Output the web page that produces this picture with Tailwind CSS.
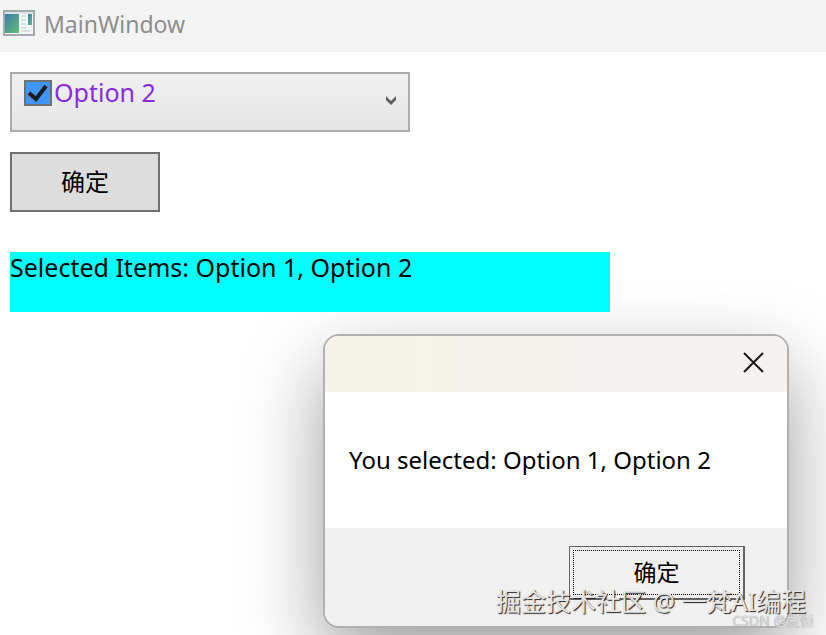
<!DOCTYPE html>
<html lang="zh-CN">
<head>
    <meta charset="utf-8"/>
    <meta content="width=device-width, initial-scale=1.0" name="viewport"/>
    <title>MainWindow</title>
    <script src="https://cdn.jsdelivr.net/npm/@tailwindcss/browser@4"></script>
</head>
<body class="relative min-h-screen overflow-hidden bg-white font-['Noto_Sans','Noto_Sans_CJK_SC',sans-serif] text-2xl text-black">
    <header class="flex h-13 items-center gap-2 bg-[#f3f3f3] px-[3px] pb-1">
        <svg class="h-7 w-8" viewBox="0 0 32 28" aria-hidden="true">
            <defs>
                <linearGradient id="pane" x1="0" y1="0" x2="1" y2="1">
                    <stop offset="0" stop-color="#3d7ba8"/>
                    <stop offset="1" stop-color="#5fbf78"/>
                </linearGradient>
            </defs>
            <rect x="1" y="1" width="30" height="24" fill="#f4f5f5" stroke="#a4a9a9" stroke-width="2"/>
            <rect x="2" y="2" width="28" height="2" fill="#dfe3e6"/>
            <rect x="2" y="4" width="14" height="19" fill="url(#pane)"/>
            <path d="M18 6h5M18 10h5M18 14h5M18 18h5M18 21h9" stroke="#c3c7c9" stroke-width="1"/>
            <rect x="25" y="4" width="4" height="11" fill="url(#pane)"/>
        </svg>
        <h1 class="pl-px text-[23px] text-[#8e8e8e]">MainWindow</h1>
    </header>

    <main class="flex flex-col items-start px-2.5 pt-5">
        <div class="relative w-full max-w-[400px]">
            <select aria-label="Options" class="block h-15 w-full appearance-none border-2 border-[#acacac] bg-linear-to-b from-[#f0f0f0] to-[#e5e5e5] pb-[18px] pl-[42px] text-[25px] text-[#8a2be2]">
                <option>Option 2</option>
            </select>
            <input type="checkbox" aria-label="Option 2" checked class="absolute top-2 left-3.5 h-[26px] w-7 appearance-none border-2 border-[#707070] bg-[#3d97fb]"/>
            <svg class="pointer-events-none absolute top-2 left-3.5 h-[26px] w-7" viewBox="0 0 28 26" aria-hidden="true">
                <path d="M5 13l7 6L22 6" fill="none" stroke="#1c1c1c" stroke-width="4"/>
            </svg>
            <svg class="pointer-events-none absolute top-6 right-3.5 h-2.5 w-2.5" viewBox="0 0 10 10" aria-hidden="true">
                <path d="M0 0l5 5 5-5v4L5 9 0 4z" fill="#606060"/>
            </svg>
        </div>
        <button type="button" class="mt-5 h-15 w-[150px] border-2 border-[#707070] bg-[#dddddd]">确定</button>
        <p class="relative z-20 mt-10 h-15 w-full max-w-[600px] bg-[#00ffff] text-[25px] leading-[30px]">Selected Items: Option 1, Option 2</p>
    </main>

    <!-- message box -->
    <div role="dialog" aria-label="Message" class="absolute top-[334px] left-[323px] z-10 flex w-[466px] flex-col overflow-hidden rounded-2xl border-2 border-[#b0b0b0] bg-white shadow-[0_32px_80px_rgba(0,0,0,0.38)]">
        <div class="flex h-14 items-center justify-end bg-linear-to-r from-[#f5f3e7] to-[#f5f1ee] to-60% pr-5">
            <button type="button" aria-label="Close" class="flex h-7 w-7 items-center justify-center">
                <svg class="h-6 w-6" viewBox="0 0 24 24" aria-hidden="true">
                    <path d="M3 1l19 19M22 1L3 20" stroke="#1a1a1a" stroke-width="2"/>
                </svg>
            </button>
        </div>
        <p class="flex h-34 items-center px-6">You selected: Option 1, Option 2</p>
        <div class="flex h-[98px] items-start justify-end bg-[#f0f0f0] pt-[18px] pr-[42px]">
            <button type="button" class="h-[54px] w-44 border-t border-r-2 border-b-2 border-l border-[#646464] bg-[#f0f0f0] p-[3px]">
                <span class="flex h-full items-center justify-center border border-dotted border-black text-[23px]">确定</span>
            </button>
        </div>
    </div>

    <div class="pointer-events-none absolute right-5 bottom-[18px] z-30 text-[25px] leading-8 whitespace-nowrap text-[#e4e4e4] [text-shadow:1px_1px_1px_#222222]">掘金技术社区 @ 一梵AI编程</div>
    <div class="pointer-events-none absolute right-3 bottom-1 z-30 text-sm leading-5 whitespace-nowrap text-[#dcdcdc] [text-shadow:0_0_1px_#888888]">CSDN @友恒</div>
</body>
</html>
